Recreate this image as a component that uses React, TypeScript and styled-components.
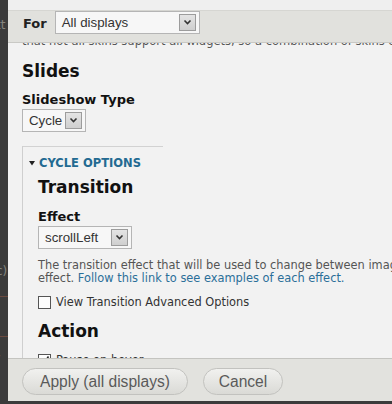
import React from 'react';
import styled, { createGlobalStyle } from 'styled-components';

const GlobalStyle = createGlobalStyle`
  html, body {
    margin: 0;
    padding: 0;
    background: #3b3b3b;
  }
  * {
    box-sizing: border-box;
  }
`;

const Page = styled.div`
  display: flex;
  width: 392px;
  height: 404px;
  overflow: hidden;
  background: #3b3b3b;
`;

// strip of the page that lies behind the dialog
const Backdrop = styled.div`
  width: 8px;
  flex: none;
  display: flex;
  flex-direction: column;
  overflow: hidden;
  font-family: 'DejaVu Sans', sans-serif;
  font-size: 12px;
  line-height: 14px;
  color: #85857f;
`;

const Frag = styled.span<{ $mt: number }>`
  margin-top: ${(p) => p.$mt}px;
  margin-left: -4px;
  white-space: nowrap;
`;

const Rule = styled.div<{ $mt: number }>`
  margin-top: ${(p) => p.$mt}px;
  height: 1px;
  flex: none;
  background: #6b4a40;
`;

const Dialog = styled.div`
  flex: 1;
  height: 401px;
  display: flex;
  flex-direction: column;
  background: #f2f2f2;
  font-family: 'DejaVu Sans', sans-serif;
  color: #222;
`;

const TopGap = styled.div`
  height: 10px;
  flex: none;
  background: #efefef;
`;

const FilterBar = styled.div`
  height: 33px;
  flex: none;
  display: flex;
  align-items: flex-start;
  gap: 8px;
  padding: 0 0 0 15px;
  background: #e1e1dd;
  border-top: 1px solid #d6d6d2;
  border-bottom: 1px solid #c9c9c5;
  label {
    font-weight: bold;
    font-size: 13px;
    margin-top: 5px;
  }
`;

const Select = styled.div<{ $width: number; $mt?: number }>`
  width: ${(p) => p.$width}px;
  height: 23px;
  margin-top: ${(p) => p.$mt ?? 0}px;
  display: flex;
  align-items: center;
  justify-content: space-between;
  padding: 0 3px 0 6px;
  background: #f7f7f7;
  border: 1px solid #b5b5b5;
  font-family: 'Liberation Sans', Arial, sans-serif;
  font-size: 13.3px;
  color: #333;
`;

const Arrow = styled.span`
  width: 17px;
  height: 17px;
  display: flex;
  align-items: center;
  justify-content: center;
  background: linear-gradient(#e4e4e4, #cfcfcf);
  border: 1px solid #9c9c9c;
`;

const Content = styled.div`
  flex: 1;
  overflow: hidden;
  padding-left: 14px;
  color: #555;
`;

const CutLine = styled.div`
  margin-top: -9px;
  font-size: 11.5px;
  line-height: 14px;
  white-space: nowrap;
  color: #555;
`;

const Heading = styled.h2<{ $mt: number }>`
  margin: ${(p) => p.$mt}px 0 0;
  font-size: 17px;
  line-height: 22px;
  font-weight: bold;
  color: #111;
`;

const Label = styled.div<{ $mt: number }>`
  margin-top: ${(p) => p.$mt}px;
  font-size: 13px;
  font-weight: bold;
  line-height: 16px;
  color: #111;
`;

const Fieldset = styled.div`
  position: relative;
  margin-top: 14px;
  padding: 10px 0 0 15px;
  border-left: 1px solid #cfcfcf;
  min-height: 230px;
  &::before {
    content: '';
    position: absolute;
    top: 0;
    left: 0;
    width: 140px;
    height: 1px;
    background: #d2d2d2;
  }
`;

const Legend = styled.div`
  display: flex;
  align-items: center;
  gap: 4px;
  margin-left: -9px;
  font-size: 11.5px;
  font-weight: bold;
  color: #236a91;
  line-height: 14px;
`;

const Description = styled.div`
  margin-top: 10px;
  font-size: 11.4px;
  line-height: 13px;
  white-space: nowrap;
  color: #555;
  a {
    color: #2b6f99;
    text-decoration: none;
  }
`;

const CheckRow = styled.div<{ $mt: number }>`
  display: flex;
  align-items: center;
  gap: 5px;
  margin-top: ${(p) => p.$mt}px;
  font-size: 11.4px;
  color: #333;
  line-height: 14px;
`;

const Box = styled.span`
  width: 13px;
  height: 13px;
  flex: none;
  display: flex;
  align-items: center;
  justify-content: center;
  background: #fdfdfd;
  border: 1px solid #555;
`;

const Footer = styled.div`
  height: 43px;
  flex: none;
  display: flex;
  align-items: center;
  gap: 15px;
  padding: 0 0 0 14px;
  background: #e2e2de;
  border-top: 1px solid #c4c4c0;
`;

const Button = styled.button<{ $width: number }>`
  width: ${(p) => p.$width}px;
  height: 27px;
  margin-top: 3px;
  border: 1px solid #c2c2bf;
  border-radius: 14px;
  background: linear-gradient(#f1f1ef, #dadad6);
  font-family: 'Liberation Sans', Arial, sans-serif;
  font-size: 15.6px;
  color: #5a5a5a;
  padding: 0;
`;

const Chevron = () => (
  <svg width="9" height="7" viewBox="0 0 9 7">
    <path d="M1.5 1.5 L4.5 4.5 L7.5 1.5" stroke="#333" strokeWidth="1.6" fill="none" />
  </svg>
);

const Tick = () => (
  <svg width="10" height="10" viewBox="0 0 10 10">
    <path d="M2 5 L4 8 L8.5 1.5" stroke="#222" strokeWidth="1.6" fill="none" />
  </svg>
);

const App: React.FC = () => {
  return (
    <Page>
      <GlobalStyle />
      <Backdrop>
        <Frag $mt={18}>tt</Frag>
        <Frag $mt={204}>:</Frag>
        <Frag $mt={14}>c)</Frag>
        <Rule $mt={18} />
        <Rule $mt={39} />
        <Frag $mt={16}>/</Frag>
        <Frag $mt={4}>|</Frag>
      </Backdrop>
      <Dialog>
        <TopGap />
        <FilterBar>
          <label>For</label>
          <Select $width={145}>
            All displays
            <Arrow>
              <Chevron />
            </Arrow>
          </Select>
        </FilterBar>
        <Content>
          <CutLine>
            that not all skins support all widgets, so a combination of skins could be
          </CutLine>
          <Heading $mt={12}>Slides</Heading>
          <Label $mt={10}>Slideshow Type</Label>
          <Select $width={64} $mt={1}>
            Cycle
            <Arrow>
              <Chevron />
            </Arrow>
          </Select>
          <Fieldset>
            <Legend>
              <svg width="6" height="5" viewBox="0 0 6 5">
                <path d="M0 0 H6 L3 4.5 Z" fill="#222" />
              </svg>
              CYCLE OPTIONS
            </Legend>
            <Heading $mt={6}>Transition</Heading>
            <Label $mt={11}>Effect</Label>
            <Select $width={94} $mt={1}>
              scrollLeft
              <Arrow>
                <Chevron />
              </Arrow>
            </Select>
            <Description>
              The transition effect that will be used to change between images. Not all options
              <br />
              effect. <a href="#">Follow this link to see examples of each effect.</a>
            </Description>
            <CheckRow $mt={10}>
              <Box />
              View Transition Advanced Options
            </CheckRow>
            <Heading $mt={11}>Action</Heading>
            <CheckRow $mt={11}>
              <Box>
                <Tick />
              </Box>
              Pause on hover
            </CheckRow>
          </Fieldset>
        </Content>
        <Footer>
          <Button $width={166}>Apply (all displays)</Button>
          <Button $width={80}>Cancel</Button>
        </Footer>
      </Dialog>
    </Page>
  );
};

export default App;
